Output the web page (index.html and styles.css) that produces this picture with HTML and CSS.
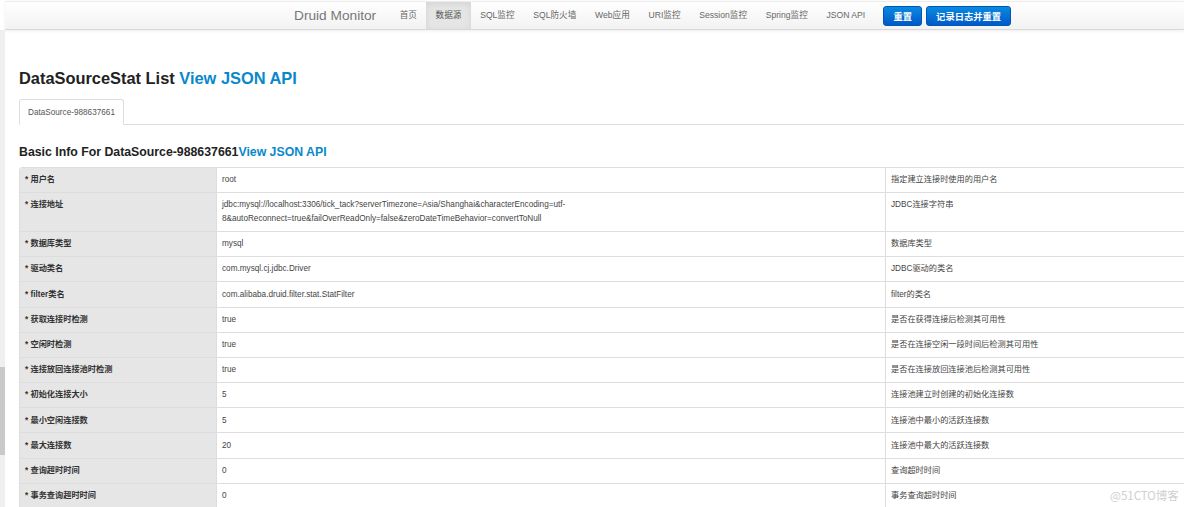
FILE: index.html
```html
<!DOCTYPE html>
<html lang="zh-CN">
<head>
<meta charset="utf-8">
<title>Druid Monitor</title>
<link rel="stylesheet" href="styles.css">
</head>
<body>
<div class="page">
  <div class="strip"><div class="strip-thumb"></div></div>
  <div class="main">
    <div class="navbar">
      <div class="nav-inner">
        <span class="brand">Druid Monitor</span>
        <ul class="nav">
          <li><a>首页</a></li>
          <li class="active"><a>数据源</a></li>
          <li><a>SQL监控</a></li>
          <li><a>SQL防火墙</a></li>
          <li><a>Web应用</a></li>
          <li><a>URI监控</a></li>
          <li><a>Session监控</a></li>
          <li><a>Spring监控</a></li>
          <li><a>JSON API</a></li>
        </ul>
        <div class="btns">
          <button class="btn">重置</button>
          <button class="btn">记录日志并重置</button>
        </div>
      </div>
    </div>
    <div class="content">
      <h3 class="title">DataSourceStat List <a class="link">View JSON API</a></h3>
      <ul class="tabs">
        <li class="tab active">DataSource-988637661</li>
      </ul>
      <h4 class="subtitle">Basic Info For DataSource-988637661<a class="link">View JSON API</a></h4>
      <table class="info">
        <colgroup><col class="c1"><col class="c2"><col class="c3"></colgroup>
        <tbody>
          <tr><th>* 用户名</th><td>root</td><td>指定建立连接时使用的用户名</td></tr>
          <tr><th>* 连接地址</th><td>jdbc:mysql://localhost:3306/tick_tack?serverTimezone=Asia/Shanghai&amp;characterEncoding=utf-<br>8&amp;autoReconnect=true&amp;failOverReadOnly=false&amp;zeroDateTimeBehavior=convertToNull</td><td>JDBC连接字符串</td></tr>
          <tr><th>* 数据库类型</th><td>mysql</td><td>数据库类型</td></tr>
          <tr><th>* 驱动类名</th><td>com.mysql.cj.jdbc.Driver</td><td>JDBC驱动的类名</td></tr>
          <tr><th>* filter类名</th><td>com.alibaba.druid.filter.stat.StatFilter</td><td>filter的类名</td></tr>
          <tr><th>* 获取连接时检测</th><td>true</td><td>是否在获得连接后检测其可用性</td></tr>
          <tr><th>* 空闲时检测</th><td>true</td><td>是否在连接空闲一段时间后检测其可用性</td></tr>
          <tr><th>* 连接放回连接池时检测</th><td>true</td><td>是否在连接放回连接池后检测其可用性</td></tr>
          <tr><th>* 初始化连接大小</th><td>5</td><td>连接池建立时创建的初始化连接数</td></tr>
          <tr><th>* 最小空闲连接数</th><td>5</td><td>连接池中最小的活跃连接数</td></tr>
          <tr><th>* 最大连接数</th><td>20</td><td>连接池中最大的活跃连接数</td></tr>
          <tr><th>* 查询超时时间</th><td>0</td><td>查询超时时间</td></tr>
          <tr><th>* 事务查询超时时间</th><td>0</td><td>事务查询超时时间</td></tr>
        </tbody>
      </table>
    </div>
  </div>
</div>
<div class="watermark">@51CTO博客</div>
</body>
</html>
```
FILE: styles.css
```css
html, body {
  margin: 0;
  padding: 0;
  background: #fff;
  overflow: hidden;
  height: 507px;
}
body {
  font-family: "Liberation Sans", Arial, "Noto Sans CJK SC", sans-serif;
  color: #333;
}
.page {
  display: flex;
  width: 1184px;
  height: 507px;
}
.strip {
  width: 5px;
  flex: none;
  margin-top: 30px;
  background: #efefef;
  display: flex;
  flex-direction: column;
}
.strip-thumb {
  margin-top: 337px;
  height: 88px;
  background: #c9c9c9;
}
.main {
  flex: 1;
  min-width: 0;
}
.navbar {
  margin-top: 1px;
  height: 27px;
  border-top: 1px solid #ececec;
  border-bottom: 1px solid #d8d8d8;
  background: linear-gradient(#ffffff, #f2f2f2);
  box-shadow: 0 1px 3px rgba(0,0,0,0.07);
}
.nav-inner {
  display: flex;
  align-items: center;
  height: 27px;
  padding-left: 289px;
}
.brand {
  font-size: 13.7px;
  color: #777;
  padding-right: 14px;
  line-height: 27px;
}
.nav {
  display: flex;
  list-style: none;
  margin: 0;
  padding: 0;
  height: 27px;
}
.nav li a {
  display: block;
  padding: 0 9.25px 0 9.5px;
  font-size: 8.6px;
  line-height: 27px;
  color: #666;
}
.nav li.active a {
  background: #e5e5e5;
  box-shadow: inset 0 2px 6px rgba(0,0,0,0.08);
  color: #555;
}
.btns {
  display: flex;
  gap: 4px;
  margin-left: 9px;
}
.btn {
  height: 20px;
  padding: 0 9px;
  border: 1px solid #0055b8;
  border-radius: 3px;
  background: linear-gradient(#0a8ae0, #0059c8);
  color: #fff;
  font-family: "Noto Sans CJK SC", sans-serif;
  font-weight: bold;
  font-size: 9.3px;
  line-height: 18px;
}
.content {
  padding-left: 14px;
}
.title {
  margin: 38px 0 11px;
  font-size: 16.4px;
  line-height: 20px;
  font-weight: bold;
  color: #222;
}
.link {
  color: #0a88cc;
}
.tabs {
  list-style: none;
  margin: 0;
  padding: 0;
  display: flex;
  border-bottom: 1px solid #ddd;
  width: 1200px;
}
.tab {
  margin-bottom: -1px;
  padding: 5.5px 8px;
  font-size: 8.2px;
  line-height: 13px;
  color: #555;
  border: 1px solid transparent;
  border-radius: 3px 3px 0 0;
}
.tab.active {
  border-color: #ddd #ddd transparent;
  background: #fff;
}
.subtitle {
  margin: 19px 0 7px;
  font-size: 12.3px;
  line-height: 16px;
  font-weight: bold;
  color: #222;
}
.info {
  width: 1180px;
  table-layout: fixed;
  border-collapse: separate;
  border-spacing: 0;
  border: 1px solid #ddd;
  border-radius: 3px 0 0 0;
  font-size: 8.2px;
  line-height: 13.6px;
}
.c1 { width: 196px; }
.c2 { width: 669px; }
.info th, .info td {
  text-align: left;
  vertical-align: top;
  padding: 5.3px 5px;
  border-top: 1px solid #ddd;
  font-weight: normal;
  font-family: "Liberation Sans", Arial, "Noto Sans CJK SC", sans-serif;
}
.info tr:first-child th, .info tr:first-child td {
  border-top: 0;
}
.info th {
  background: #e6e6e6;
  color: #333;
  font-weight: bold;
}
.info td {
  border-left: 1px solid #ddd;
  color: #444;
}
.watermark {
  position: absolute;
  left: 1110px;
  top: 487px;
  font-family: "Noto Sans CJK SC", sans-serif;
  font-size: 11.5px;
  color: #cfcfcf;
}
```
